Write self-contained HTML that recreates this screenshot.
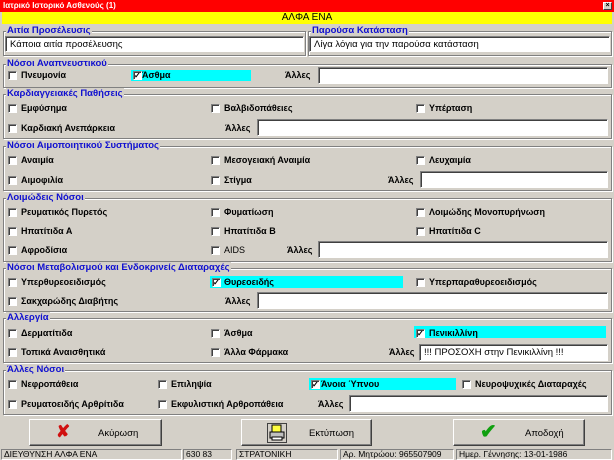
<!DOCTYPE html>
<html><head><meta charset="utf-8"><style>
*{margin:0;padding:0;box-sizing:border-box}
body{width:614px;height:460px;background:#d4d0c8;font-family:"Liberation Sans",Arial,sans-serif;font-size:9px;font-weight:bold;color:#000;position:relative;overflow:hidden}
.a{position:absolute;white-space:nowrap}
.g{position:absolute;border:1px solid #808080;box-shadow:1px 1px 0 #fff inset,1px 1px 0 #fff}
.gl{position:absolute;color:#1010d0;background:#d4d0c8;padding:0 1px;font-size:9.5px;line-height:11px}
.cb{position:absolute;width:9px;height:9px;background:#fff;border-top:1px solid #808080;border-left:1px solid #808080;border-right:1px solid #fff;border-bottom:1px solid #fff;box-shadow:1px 1px 0 #404040 inset}
.t{position:absolute;line-height:11px}
.in{position:absolute;background:#fff;border-top:1px solid #808080;border-left:1px solid #808080;border-bottom:1px solid #fff;border-right:1px solid #fff;box-shadow:1px 1px 0 #404040 inset;font-weight:normal;font-size:9.5px;padding:2px 4px;line-height:11px}
.cy{position:absolute;background:#00ffff}
.btn{position:absolute;background:#d4d0c8;border-top:1px solid #fff;border-left:1px solid #fff;border-right:1px solid #404040;border-bottom:1px solid #404040;box-shadow:-1px -1px 0 #808080 inset;font-weight:normal;font-size:9.5px}
.sb{position:absolute;top:449px;height:11px;border-top:1px solid #808080;border-left:1px solid #808080;border-right:1px solid #fff;border-bottom:1px solid #fff;font-weight:normal;font-size:8.5px;line-height:9px;padding-left:2px}
</style></head><body>
<div class="a" style="left:0;top:0;width:614px;height:12px;background:#ff0000;color:#fff;font-size:8px;line-height:12px;padding-left:3px">Ιατρικό Ιστορικό Ασθενούς (1)</div>
<div class="a" style="left:603px;top:2px;width:9px;height:8px;background:#d4d0c8;border:1px solid #fff;border-right-color:#404040;border-bottom-color:#404040;font-size:7px;line-height:6px;text-align:center">×</div>
<div class="a" style="left:2px;top:12px;width:610px;height:12px;background:#ffff00;text-align:center;font-weight:normal;font-size:10px;line-height:12px">ΑΛΦΑ ΕΝΑ</div>

<!-- group 1 -->
<div class="g" style="left:3px;top:31px;width:303px;height:25px"></div>
<div class="gl" style="left:6px;top:25px">Αιτία Προσέλευσις</div>
<div class="in" style="left:5px;top:36px;width:299px;height:16px;font-weight:normal">Κάποια αιτία προσέλευσης</div>
<div class="g" style="left:308px;top:31px;width:304px;height:25px"></div>
<div class="gl" style="left:311px;top:25px">Παρούσα Κατάσταση</div>
<div class="in" style="left:309px;top:36px;width:301px;height:16px">Λίγα λόγια για την παρούσα κατάσταση</div>

<!-- group 2 -->
<div class="g" style="left:3px;top:64px;width:609px;height:24px"></div>
<div class="gl" style="left:6px;top:58px">Νόσοι Αναπνευστικού</div>
<div class="cb" style="left:8px;top:71px"></div><div class="t" style="left:21px;top:70px">Πνευμονία</div>
<div class="cy" style="left:131px;top:70px;width:120px;height:11px"></div>
<div class="cb" style="left:133px;top:71px;font-size:8px;line-height:7px">✓</div><div class="t" style="left:142px;top:70px">Άσθμα</div>
<div class="t" style="left:285px;top:70px">Άλλες</div>
<div class="in" style="left:318px;top:67px;width:290px;height:17px"></div>

<!-- group 3 -->
<div class="g" style="left:3px;top:94px;width:609px;height:45px"></div>
<div class="gl" style="left:6px;top:88px">Καρδιαγγειακές Παθήσεις</div>
<div class="cb" style="left:8px;top:104px"></div><div class="t" style="left:21px;top:103px">Εμφύσημα</div>
<div class="cb" style="left:211px;top:104px"></div><div class="t" style="left:224px;top:103px">Βαλβιδοπάθειες</div>
<div class="cb" style="left:416px;top:104px"></div><div class="t" style="left:429px;top:103px">Υπέρταση</div>
<div class="cb" style="left:8px;top:124px"></div><div class="t" style="left:21px;top:123px">Καρδιακή Ανεπάρκεια</div>
<div class="t" style="left:225px;top:123px">Άλλες</div>
<div class="in" style="left:257px;top:119px;width:351px;height:17px"></div>

<!-- group 4 -->
<div class="g" style="left:3px;top:146px;width:609px;height:45px"></div>
<div class="gl" style="left:6px;top:140px">Νόσοι Αιμοποιητικού Συστήματος</div>
<div class="cb" style="left:8px;top:156px"></div><div class="t" style="left:21px;top:155px">Αναιμία</div>
<div class="cb" style="left:211px;top:156px"></div><div class="t" style="left:224px;top:155px">Μεσογειακή Αναιμία</div>
<div class="cb" style="left:416px;top:156px"></div><div class="t" style="left:429px;top:155px">Λευχαιμία</div>
<div class="cb" style="left:8px;top:176px"></div><div class="t" style="left:21px;top:175px">Αιμοφιλία</div>
<div class="cb" style="left:211px;top:176px"></div><div class="t" style="left:224px;top:175px">Στίγμα</div>
<div class="t" style="left:388px;top:175px">Άλλες</div>
<div class="in" style="left:420px;top:171px;width:188px;height:17px"></div>

<!-- group 5 -->
<div class="g" style="left:3px;top:198px;width:609px;height:64px"></div>
<div class="gl" style="left:6px;top:192px">Λοιμώδεις Νόσοι</div>
<div class="cb" style="left:8px;top:208px"></div><div class="t" style="left:21px;top:207px">Ρευματικός Πυρετός</div>
<div class="cb" style="left:211px;top:208px"></div><div class="t" style="left:224px;top:207px">Φυματίωση</div>
<div class="cb" style="left:416px;top:208px"></div><div class="t" style="left:429px;top:207px">Λοιμώδης Μονοπυρήνωση</div>
<div class="cb" style="left:8px;top:227px"></div><div class="t" style="left:21px;top:226px">Ηπατίτιδα Α</div>
<div class="cb" style="left:211px;top:227px"></div><div class="t" style="left:224px;top:226px">Ηπατίτιδα Β</div>
<div class="cb" style="left:416px;top:227px"></div><div class="t" style="left:429px;top:226px">Ηπατίτιδα C</div>
<div class="cb" style="left:8px;top:246px"></div><div class="t" style="left:21px;top:245px">Αφροδίσια</div>
<div class="cb" style="left:211px;top:246px"></div><div class="t" style="left:224px;top:245px;font-weight:normal">AIDS</div>
<div class="t" style="left:287px;top:245px">Άλλες</div>
<div class="in" style="left:318px;top:241px;width:290px;height:17px"></div>

<!-- group 6 -->
<div class="g" style="left:3px;top:268px;width:609px;height:44px"></div>
<div class="gl" style="left:6px;top:262px">Νόσοι Μεταβολισμού και Ενδοκρινείς Διαταραχές</div>
<div class="cb" style="left:8px;top:278px"></div><div class="t" style="left:21px;top:277px">Υπερθυρεοειδισμός</div>
<div class="cy" style="left:210px;top:276px;width:193px;height:12px"></div>
<div class="cb" style="left:212px;top:278px;font-size:8px;line-height:7px">✓</div><div class="t" style="left:224px;top:277px">Θυρεοειδής</div>
<div class="cb" style="left:416px;top:278px"></div><div class="t" style="left:429px;top:277px">Υπερπαραθυρεοειδισμός</div>
<div class="cb" style="left:8px;top:297px"></div><div class="t" style="left:21px;top:296px">Σακχαρώδης Διαβήτης</div>
<div class="t" style="left:225px;top:296px">Άλλες</div>
<div class="in" style="left:257px;top:292px;width:351px;height:17px"></div>

<!-- group 7 -->
<div class="g" style="left:3px;top:318px;width:609px;height:45px"></div>
<div class="gl" style="left:6px;top:312px">Αλλεργία</div>
<div class="cb" style="left:8px;top:329px"></div><div class="t" style="left:21px;top:328px">Δερματίτιδα</div>
<div class="cb" style="left:211px;top:329px"></div><div class="t" style="left:224px;top:328px">Άσθμα</div>
<div class="cy" style="left:414px;top:326px;width:192px;height:12px"></div>
<div class="cb" style="left:416px;top:329px;font-size:8px;line-height:7px">✓</div><div class="t" style="left:429px;top:328px">Πενικιλλίνη</div>
<div class="cb" style="left:8px;top:348px"></div><div class="t" style="left:21px;top:347px">Τοπικά Αναισθητικά</div>
<div class="cb" style="left:211px;top:348px"></div><div class="t" style="left:224px;top:347px">Άλλα Φάρμακα</div>
<div class="t" style="left:389px;top:347px">Άλλες</div>
<div class="in" style="left:419px;top:344px;width:189px;height:17px">!!! ΠΡΟΣΟΧΗ στην Πενικιλλίνη !!!</div>

<!-- group 8 -->
<div class="g" style="left:3px;top:370px;width:609px;height:45px"></div>
<div class="gl" style="left:6px;top:364px">Άλλες Νόσοι</div>
<div class="cb" style="left:8px;top:380px"></div><div class="t" style="left:21px;top:379px">Νεφροπάθεια</div>
<div class="cb" style="left:158px;top:380px"></div><div class="t" style="left:171px;top:379px">Επιληψία</div>
<div class="cy" style="left:309px;top:378px;width:147px;height:12px"></div>
<div class="cb" style="left:311px;top:380px;font-size:8px;line-height:7px">✓</div><div class="t" style="left:321px;top:379px">Άνοια Ύπνου</div>
<div class="cb" style="left:462px;top:380px"></div><div class="t" style="left:475px;top:379px">Νευροψυχικές Διαταραχές</div>
<div class="cb" style="left:8px;top:400px"></div><div class="t" style="left:21px;top:399px">Ρευματοειδής Αρθρίτιδα</div>
<div class="cb" style="left:158px;top:400px"></div><div class="t" style="left:171px;top:399px">Εκφυλιστική Αρθροπάθεια</div>
<div class="t" style="left:318px;top:399px">Άλλες</div>
<div class="in" style="left:349px;top:395px;width:259px;height:17px"></div>

<!-- buttons -->
<div class="btn" style="left:29px;top:419px;width:133px;height:27px">
<span class="a" style="left:26px;top:3px;color:#d01010;font-size:17px;font-weight:bold;line-height:18px">✘</span>
<span class="a" style="left:68px;top:8px">Ακύρωση</span></div>
<div class="btn" style="left:241px;top:419px;width:131px;height:27px">
<svg class="a" style="left:25px;top:3px" width="20" height="20" viewBox="0 0 20 20"><rect x="0.5" y="0.5" width="19" height="19" fill="#d4d0c8" stroke="#404040"/><rect x="5" y="2" width="9" height="7" fill="#ffff40" stroke="#000"/><rect x="3" y="9" width="14" height="6" fill="#c0c0c0" stroke="#000"/><rect x="5" y="14" width="10" height="3" fill="#fff" stroke="#000"/></svg>
<span class="a" style="left:67px;top:8px">Εκτύπωση</span></div>
<div class="btn" style="left:453px;top:419px;width:132px;height:27px">
<span class="a" style="left:26px;top:2px;color:#10a010;font-size:20px;font-weight:bold;line-height:20px">✔</span>
<span class="a" style="left:71px;top:8px">Αποδοχή</span></div>

<!-- status -->
<div class="sb" style="left:1px;width:181px">ΔΙΕΥΘΥΝΣΗ ΑΛΦΑ ΕΝΑ</div>
<div class="sb" style="left:183px;width:49px">630 83</div>
<div class="sb" style="left:236px;width:102px">ΣΤΡΑΤΟΝΙΚΗ</div>
<div class="sb" style="left:340px;width:114px">Αρ. Μητρώου: 965507909</div>
<div class="sb" style="left:456px;width:156px">Ημερ. Γέννησης: 13-01-1986</div>
</body></html>
